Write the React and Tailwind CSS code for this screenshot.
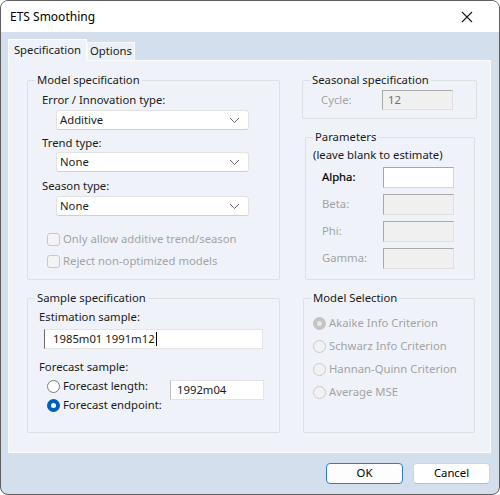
import React from "react";

const Chevron = () => (
  <svg width="11" height="7" viewBox="0 0 11 7" fill="none">
    <path d="M1 1l4.5 4.5L10 1" stroke="#6b6b6b" strokeWidth="1" />
  </svg>
);

const Dropdown = ({ value, className = "" }) => (
  <div
    className={`w-[193px] h-[20px] ml-[14px] bg-white border border-[#e2e2e2] border-b-[#cfcfcf] rounded-[3px] flex items-center justify-between pl-[3px] pr-[8px] ${className}`}
  >
    <span>{value}</span>
    <Chevron />
  </div>
);

const Checkbox = ({ label, className = "" }) => (
  <div className={`h-[16px] flex items-center ml-[5px] text-[#a3a3a3] ${className}`}>
    <span className="w-[13px] h-[13px] rounded-[3px] border border-[#c8c8c8] bg-[#f4f4f4] mr-[3px]" />
    {label}
  </div>
);

const Radio = ({ checked, disabled, label, className = "" }) => {
  let circle = "border border-[#7a7a7a] bg-white";
  if (checked && !disabled) circle = "border-[4px] border-[#005fb8] bg-white";
  if (checked && disabled) circle = "border-[4px] border-[#c4c4c4] bg-[#e6e6e6]";
  if (!checked && disabled) circle = "border border-[#cacaca] bg-[#f2f2f2]";
  return (
    <div className={`flex items-center ${disabled ? "text-[#a3a3a3]" : ""} ${className}`}>
      <span className={`w-[13px] h-[13px] rounded-full mr-[3px] box-border ${circle}`} />
      {label}
    </div>
  );
};

const ParamRow = ({ label, enabled, className = "" }) => (
  <div className={`flex items-center h-[21px] ${className}`}>
    <span
      className={`w-[61px] pl-[16px] box-content ${
        enabled ? "text-black [-webkit-text-stroke:0.2px_black]" : "text-[#a3a3a3]"
      }`}
    >
      {label}
    </span>
    <div
      className={`w-[71px] h-[21px] border ${
        enabled
          ? "bg-white border-[#d6d6d6] border-t-[#a6a6a6] border-l-[#a6a6a6]"
          : "bg-[#f0f0f0] border-[#e0e0e0] border-t-[#a9a9a9] border-l-[#a9a9a9]"
      }`}
    />
  </div>
);

const Group = ({ title, className = "", children }) => (
  <fieldset className={`border border-[#dcdfe3] rounded-[2px] ${className}`}>
    <legend className="ml-[7px] px-[2px] leading-[16px]">{title}</legend>
    {children}
  </fieldset>
);

export default function App() {
  return (
    <div className="w-[500px] h-[495px] bg-[#d4dfee] border border-[#5f5f5f] rounded-[8px] overflow-hidden flex flex-col text-[11.3px] text-[#1a1a1a] font-['Noto_Sans',sans-serif]">
      {/* title bar */}
      <div className="h-[31px] bg-white flex items-center justify-between pl-[9px] pr-[26px] shrink-0">
        <span className="text-[12px] text-black">ETS Smoothing</span>
        <svg width="12" height="12" viewBox="0 0 12 12">
          <path d="M1 1l10 10M11 1L1 11" stroke="#1a1a1a" strokeWidth="1.1" />
        </svg>
      </div>

      <div className="flex-1 flex flex-col pl-[7px] pr-[8px] pt-[7px]">
        {/* tabs */}
        <div className="flex items-end h-[21px]">
          <div className="h-[22px] w-[79px] bg-[#eff3f9] border border-b-0 border-[#fbfcfe] flex items-center justify-center relative z-10 -mb-px">
            Specification
          </div>
          <div className="h-[18px] w-[48px] bg-[#ebf0f7] border border-b-0 border-[#f6f8fc] flex items-center justify-center">
            Options
          </div>
        </div>

        {/* panel */}
        <div className="h-[393px] bg-[#eff3f9] border border-[#f9fbfd] pl-[18px] pt-[11px]">
          <div className="grid grid-cols-[253px_175px] grid-rows-[208px_143px] gap-x-[22px] gap-y-[10px]">
            {/* Model specification */}
            <Group title="Model specification">
              <div className="pl-[14px] flex flex-col">
                <div className="mt-[4px] leading-[16px]">Error / Innovation type:</div>
                <Dropdown value="Additive" className="mt-[2px]" />
                <div className="mt-[5px] leading-[16px]">Trend type:</div>
                <Dropdown value="None" className="mt-[1px]" />
                <div className="mt-[6px] leading-[16px]">Season type:</div>
                <Dropdown value="None" className="mt-[2px]" />
                <Checkbox label="Only allow additive trend/season" className="mt-[15px]" />
                <Checkbox label="Reject non-optimized models" className="mt-[6px]" />
              </div>
            </Group>

            {/* right column */}
            <div className="flex flex-col">
              <Group title="Seasonal specification" className="h-[47px]">
                <div className="flex items-center h-[20px] mt-[2px]">
                  <span className="w-[61px] pl-[18px] box-content text-[#a3a3a3]">Cycle:</span>
                  <div className="w-[71px] h-[20px] bg-[#f0f0f0] border border-[#e0e0e0] border-t-[#a9a9a9] border-l-[#a9a9a9] flex items-center pl-[5px] text-[#6f6f6f]">
                    12
                  </div>
                </div>
              </Group>

              <Group title="Parameters" className="mt-[10px] ml-[3px] mr-[2px] h-[151px]">
                <div className="flex flex-col">
                  <div className="mt-[2px] pl-[7px] leading-[16px]">(leave blank to estimate)</div>
                  <ParamRow label="Alpha:" enabled className="mt-[4px]" />
                  <ParamRow label="Beta:" className="mt-[6px]" />
                  <ParamRow label="Phi:" className="mt-[6px]" />
                  <ParamRow label="Gamma:" className="mt-[6px]" />
                </div>
              </Group>
            </div>

            {/* Sample specification */}
            <Group title="Sample specification">
              <div className="pl-[11px] flex flex-col">
                <div className="mt-[3px] leading-[16px]">Estimation sample:</div>
                <div className="mt-[4px] ml-[5px] w-[219px] h-[20px] bg-white border border-[#e4e4e4] border-l-[#6a6a6a] flex items-center pl-[8px]">
                  <span>1985m01 1991m12</span>
                  <span className="w-px h-[14px] bg-black ml-px" />
                </div>
                <div className="mt-[10px] leading-[16px]">Forecast sample:</div>
                <div className="flex items-start mt-[3px]">
                  <div className="flex flex-col ml-[8px] w-[123px]">
                    <Radio label="Forecast length:" className="h-[16px]" />
                    <Radio label="Forecast endpoint:" checked className="h-[16px] mt-[3px]" />
                  </div>
                  <div className="w-[94px] h-[20px] mt-[2px] bg-white border border-[#e4e4e4] border-l-[#bdbdbd] flex items-center pl-[6px]">
                    1992m04
                  </div>
                </div>
              </div>
            </Group>

            {/* Model Selection */}
            <Group title="Model Selection" className="ml-[1px] mr-[2px]">
              <div className="flex flex-col pl-[9px] mt-[6px]">
                <Radio label="Akaike Info Criterion" checked disabled className="h-[23px]" />
                <Radio label="Schwarz Info Criterion" disabled className="h-[23px]" />
                <Radio label="Hannan-Quinn Criterion" disabled className="h-[23px]" />
                <Radio label="Average MSE" disabled className="h-[23px]" />
              </div>
            </Group>
          </div>
        </div>

        {/* buttons */}
        <div className="flex justify-end gap-[10px] mt-[10px] pr-[1px]">
          <button className="w-[77px] h-[21px] bg-[#fdfdfd] border border-[#2f7ad1] rounded-[4px] text-black">
            OK
          </button>
          <button className="w-[77px] h-[21px] bg-white border border-[#d3d3d3] border-b-[#bcbcbc] rounded-[4px] text-black">
            Cancel
          </button>
        </div>
      </div>
    </div>
  );
}
